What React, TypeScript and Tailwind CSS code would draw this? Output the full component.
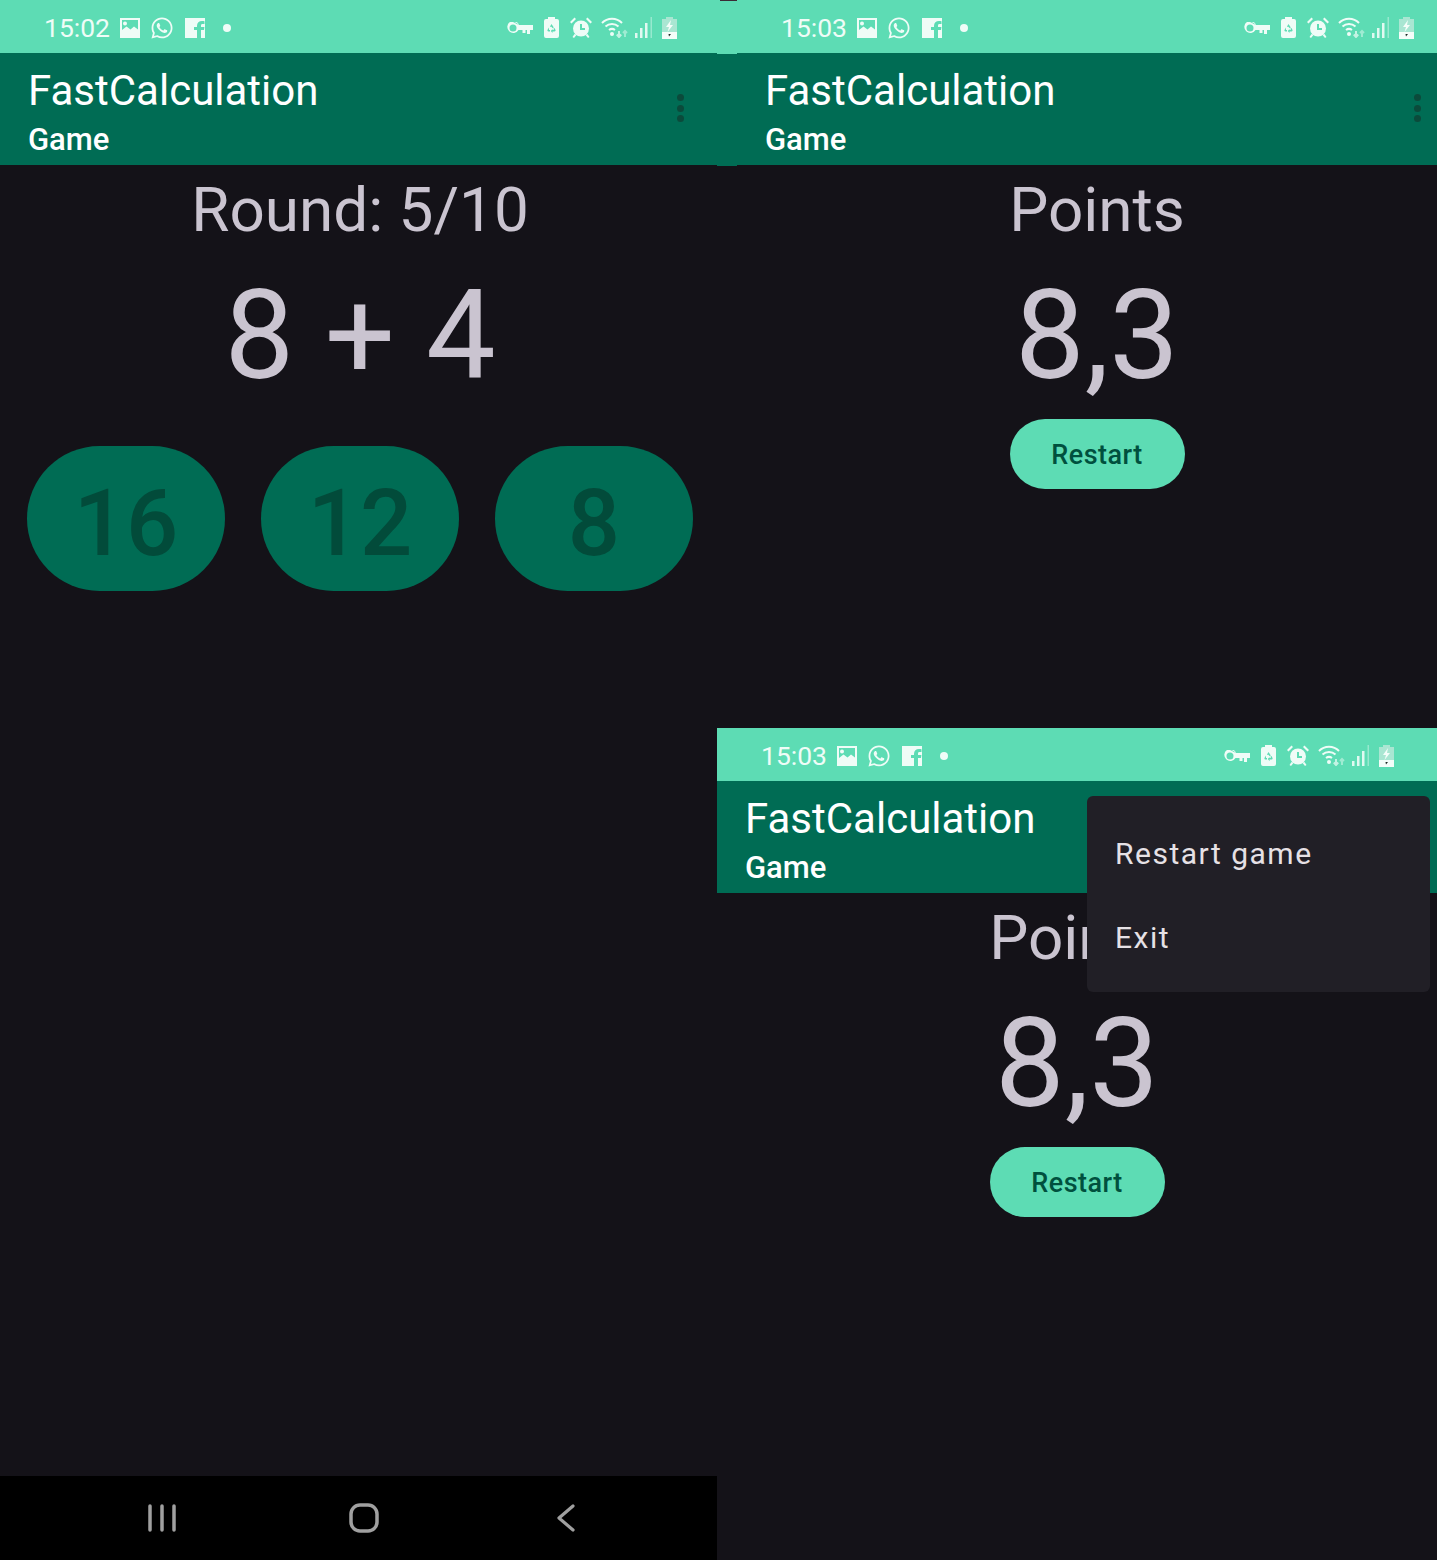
import { FaWhatsapp } from "react-icons/fa"

const screenFont = "font-['Roboto',sans-serif]"

function StatusIcons({ time }: { time: string }) {
  return (
    <div className="flex h-[53px] items-center justify-between bg-[#5ddcb4] pl-[44px] pr-[43px] pt-[2px] text-[#effcf7]">
      <div className="flex items-center">
        <span className="mt-[1px] text-[26.500px] leading-none">{time}</span>
        <svg viewBox="0 0 22 20" className="ml-[9px] h-[20px] w-[22px]" fill="currentColor">
          <path fillRule="evenodd" d="M1 0h20v20H1zM3 2v10l4.500-3.500 4 3 3.500-3L19 11.500V2zM6 3.500a2 2 0 1 1 0 4 2 2 0 0 1 0-4z" />
        </svg>
        <FaWhatsapp className="ml-[9px] h-[24px] w-[24px]" />
        <svg viewBox="0 0 20 20" className="ml-[11px] h-[20px] w-[20px]" fill="currentColor">
          <path fillRule="evenodd" d="M0 0h20v20h-4v-8h3l.4-3H16V7.500C16 6.600 16.400 6 17.500 6H19.500V3.200C18.800 3.100 18 3 17 3c-3 0-5 1.700-5 4.800V9H9v3h3v8H0z" />
        </svg>
        <span className="ml-[18px] h-[8px] w-[8px] rounded-full bg-[#effcf7]" />
      </div>
      <div className="flex items-center">
        <svg viewBox="0 0 26 12" className="h-[12px] w-[26px]" fill="currentColor">
          <path fillRule="evenodd" d="M6 0a6 6 0 0 1 5.700 3H26v5h-3v4h-3V8h-1.500v3h-3V8h-4a6 6 0 1 1 .5-5zM6 2.500a3.500 3.500 0 1 0 0 7 3.500 3.500 0 0 0 0-7z" />
        </svg>
        <svg viewBox="0 0 15 21" className="ml-[11px] h-[21px] w-[15px]" fill="currentColor">
          <path fillRule="evenodd" d="M4 0h7v2h2a2 2 0 0 1 2 2v15a2 2 0 0 1-2 2H2a2 2 0 0 1-2-2V4a2 2 0 0 1 2-2h2zM7.500 7L6 9.500l1.200.7.300-.6 1 1.600 1.300-.8zM4.800 10.500L3.500 13c-.3.700.2 1.500 1 1.500H6V13H5zM10.500 11l-1.200.7.7 1.300H8.500v-1L6.800 14l1.700 2v-1.500H10.500c.8 0 1.300-.8 1-1.500z" />
        </svg>
        <svg viewBox="0 0 22 21" className="ml-[11px] h-[21px] w-[22px]" fill="currentColor">
          <circle cx="11" cy="11.500" r="8" />
          <path d="M0 5l4.500-4.500 1.500 1.500L1.500 6.500zM22 5L17.500.5 16 2l4.500 4.500zM4.500 17l-2 3 1.500 1 2.500-3zM17.500 17l2 3-1.500 1-2.500-3z" />
          <path d="M11 7v5h4" fill="none" stroke="#5ddcb4" strokeWidth="2" />
        </svg>
        <svg viewBox="0 0 27 21" className="ml-[9px] h-[21px] w-[27px]" fill="none" stroke="currentColor" strokeWidth="2">
          <path d="M1 6a14 14 0 0 1 20 0M4.500 9.500a9.500 9.500 0 0 1 13 0M8 13a5 5 0 0 1 6 0" />
          <circle cx="11" cy="17" r="2" fill="currentColor" stroke="none" />
          <path d="M18 20v-6M15.800 17.500l2.200 2.500 2.200-2.500" opacity="0.7" />
          <path d="M24 20v-6M22 16l2-2 2 2" opacity="0.45" />
        </svg>
        <svg viewBox="0 0 18 21" className="ml-[7px] h-[21px] w-[18px]" fill="currentColor">
          <rect x="0" y="16" width="2.500" height="5" opacity="0.9" />
          <rect x="5" y="11" width="2.500" height="10" opacity="0.9" />
          <rect x="10" y="6" width="2.500" height="15" opacity="0.9" />
          <rect x="15.500" y="0" width="1.500" height="21" opacity="0.4" />
        </svg>
        <svg viewBox="0 0 15 22" className="ml-[9px] h-[22px] w-[15px]">
          <path d="M4 0h7v2h4v20H0V2h4z" fill="#a9e6d2" />
          <rect x="0" y="15" width="15" height="7" fill="#f4fdf9" />
          <path d="M9 3L4 10h3l-1.500 5L11 8H8z" fill="#f4fdf9" />
          <path d="M6.500 17H9l-2 2.500z" fill="#1f2a27" />
        </svg>
      </div>
    </div>
  )
}

function AppBar() {
  return (
    <div className="relative flex h-[112px] flex-col bg-[#006c54] pl-[28px] text-white">
      <span className="mt-[12px] text-[42px] leading-[52px]">FastCalculation</span>
      <span className="mt-[5px] text-[31px] font-medium leading-[36px]">Game</span>
      <div className="absolute right-[36px] top-[41px] flex flex-col gap-[3.500px]">
        <span className="h-[7px] w-[7px] rounded-full bg-[#0b4a3b]" />
        <span className="h-[7px] w-[7px] rounded-full bg-[#0b4a3b]" />
        <span className="h-[7px] w-[7px] rounded-full bg-[#0b4a3b]" />
      </div>
    </div>
  )
}

function PointsBody() {
  return (
    <div className="flex flex-col items-center text-[#cac4d0]">
      <span className="mt-[9px] text-[62px] leading-[72px]">Points</span>
      <span className="mt-[23px] text-[124px] leading-[134px]">8,3</span>
      <button className="mt-[16px] flex h-[70px] w-[175px] items-center justify-center rounded-full bg-[#5ddcb4] pt-[3px] text-[27px] font-medium tracking-[0.5px] text-[#00503e]">
        Restart
      </button>
    </div>
  )
}

function GameBody() {
  return (
    <div className="flex flex-col items-center text-[#cac4d0]">
      <span className="mt-[9px] text-[62px] leading-[72px]">Round: 5/10</span>
      <span className="mt-[23px] text-[124px] leading-[134px]">8 + 4</span>
      <div className="mt-[43px] flex w-full justify-center gap-[36px]">
        {["16", "12", "8"].map(n => (
          <div key={n} className="flex h-[145px] w-[198px] items-center justify-center rounded-full bg-[#006c54] pt-[10px] text-[92px] font-medium text-[#024b3a]">
            {n}
          </div>
        ))}
      </div>
    </div>
  )
}

export default function App() {
  return (
    <div className={`flex h-[1560px] w-[1437px] overflow-hidden bg-[#141218] ${screenFont}`}>
      <div className="flex h-full w-[717px] shrink-0 flex-col overflow-hidden">
        <div className="w-[720px] flex-1">
          <StatusIcons time="15:02" />
          <AppBar />
          <GameBody />
        </div>
        <div className="flex h-[84px] w-full items-center justify-center bg-black pl-[11px] text-[#a0a0a0]">
          <div className="flex w-[202px] justify-center">
            <svg viewBox="0 0 28 28" className="h-[28px] w-[28px]" fill="none" stroke="currentColor" strokeWidth="3.500" strokeLinecap="round">
              <path d="M2 2v24M14 2v24M26 2v24" />
            </svg>
          </div>
          <div className="flex w-[202px] justify-center">
            <svg viewBox="0 0 30 30" className="h-[30px] w-[30px]" fill="none" stroke="currentColor" strokeWidth="3.500">
              <rect x="2" y="2" width="26" height="26" rx="9" />
            </svg>
          </div>
          <div className="flex w-[202px] justify-center">
            <svg viewBox="0 0 18 28" className="h-[28px] w-[18px]" fill="none" stroke="currentColor" strokeWidth="3.200" strokeLinecap="round" strokeLinejoin="round">
              <path d="M16 2L2 14l14 12" />
            </svg>
          </div>
        </div>
      </div>
      <div className="flex w-[720px] shrink-0 flex-col overflow-hidden">
        <div className="flex h-[728px] w-[720px] overflow-hidden">
          <div className="h-[166px] w-[20px] shrink-0 bg-[#006c54]">
            <div className="h-[54px] bg-[#5ddcb4]">
              <div className="ml-[3px] h-[1px] bg-[#3b2a35]" />
            </div>
          </div>
          <div className="w-[720px] shrink-0">
            <StatusIcons time="15:03" />
            <AppBar />
            <PointsBody />
          </div>
        </div>
        <div className="relative w-[720px] flex-1">
          <StatusIcons time="15:03" />
          <AppBar />
          <PointsBody />
          <div className="absolute left-[370px] top-[68px] flex h-[196px] w-[343px] flex-col rounded-[6px] bg-[#211f26] pl-[28px] text-[30px] tracking-[1.500px] text-[#e6e1e5]">
            <span className="mt-[38px] leading-[40px]">Restart game</span>
            <span className="mt-[44px] leading-[40px]">Exit</span>
          </div>
        </div>
      </div>
    </div>
  )
}
